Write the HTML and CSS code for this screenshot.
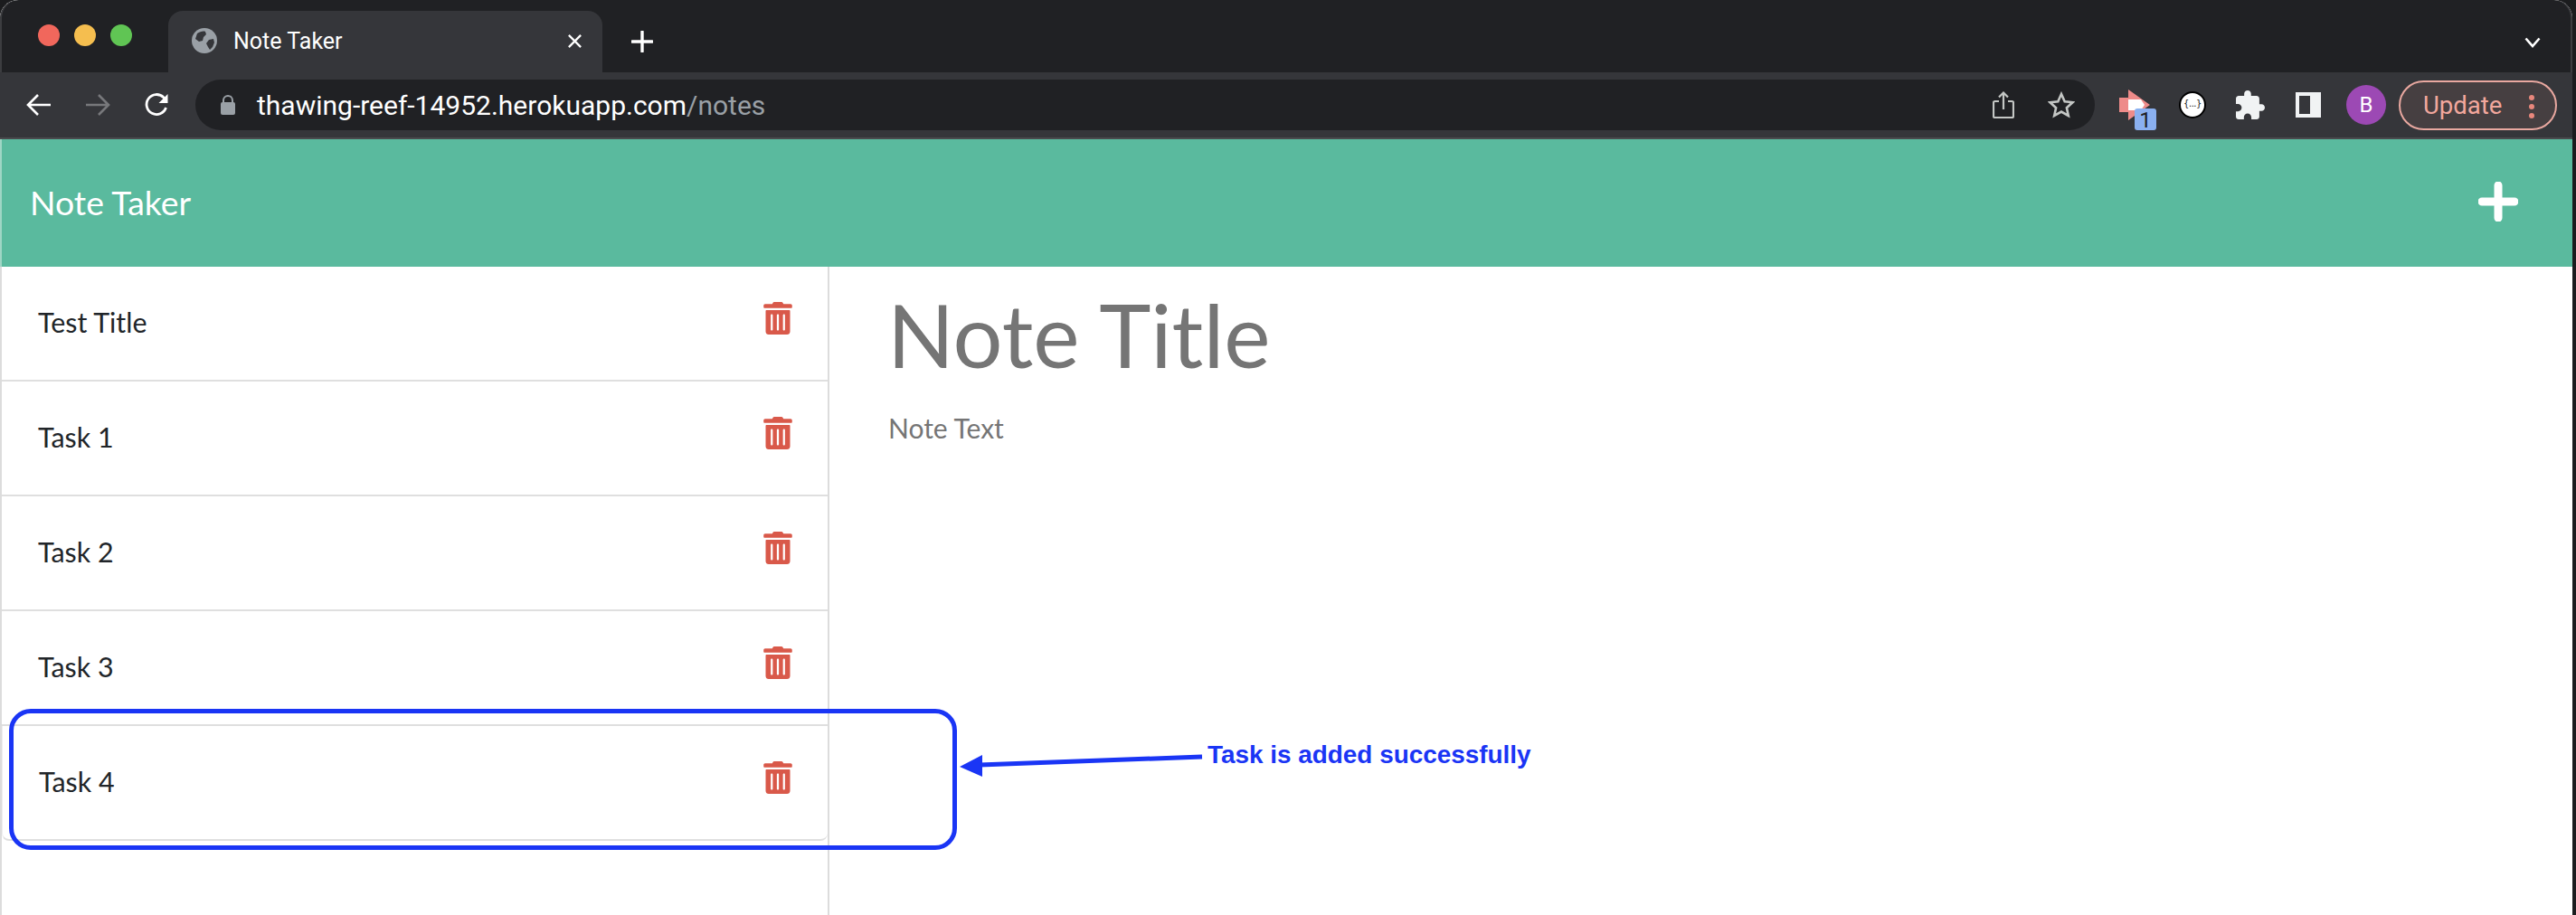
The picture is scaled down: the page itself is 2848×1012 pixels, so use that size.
FILE: index.html
```html
<!DOCTYPE html>
<html>
<head>
  <title>Note Taker</title>
  <link rel="stylesheet" href="styles.css">
</head>
<body>

  <div class="window">

    <!-- browser tabs -->
    <div class="tabstrip">
      <div class="lights">
        <span class="light red"></span>
        <span class="light yellow"></span>
        <span class="light green"></span>
      </div>
      <div class="tab">
        <svg class="globe" viewBox="0 0 28 28">
          <circle cx="14" cy="14" r="14" fill="#9aa0a6"/>
          <path d="M6 6c3-2 7-3 9-2l1 3-3 3-1 4-4 1-4-3zM24 12l-5 1-3 4 2 4 2 3 3-3 2-5z" fill="#35363a"/>
        </svg>
        <span class="tab-title">Note Taker</span>
        <svg class="tab-close" viewBox="0 0 18 18"><path d="M2 2l14 14M16 2L2 16" stroke="#fff" stroke-width="2.4"/></svg>
      </div>
      <svg class="new-tab" viewBox="0 0 24 24"><path d="M12 1v22M1 12h22" stroke="#fff" stroke-width="3.4" stroke-linecap="round"/></svg>
      <svg class="tab-menu" viewBox="0 0 18 12"><path d="M1.5 1.5L9 10l7.5-8.5" fill="none" stroke="#fff" stroke-width="2.6"/></svg>
    </div>

    <!-- address bar -->
    <div class="toolbar">
      <div class="nav-buttons">
        <div class="tool"><svg width="28" height="28" viewBox="0 0 28 28"><path d="M27 14H3M13 3L2 14l11 11" fill="none" stroke="#fff" stroke-width="2.6"/></svg></div>
        <div class="tool"><svg width="28" height="28" viewBox="0 0 28 28"><path d="M1 14h24M15 3l11 11-11 11" fill="none" stroke="#77787b" stroke-width="2.6"/></svg></div>
        <div class="tool"><svg width="28" height="28" viewBox="0 0 28 28"><path d="M24.5 17a11 11 0 1 1-2.6-11.2L25 9" fill="none" stroke="#fff" stroke-width="2.8"/><path d="M26.5 2v10h-10z" fill="#fff"/></svg></div>
      </div>
      <div class="address">
        <svg class="lock" viewBox="0 0 16 22"><path d="M3 9V6a5 5 0 0 1 10 0v3" fill="none" stroke="#9aa0a6" stroke-width="2"/><rect y="8" width="16" height="14" rx="2" fill="#9aa0a6"/></svg>
        <span class="url">thawing-reef-14952.herokuapp.com<span class="url-path">/notes</span></span>
        <svg class="share" viewBox="0 0 24 30"><path d="M7 11H2.5A1.5 1.5 0 0 0 1 12.500V27.500A1.500 1.500 0 0 0 2.500 29h19a1.500 1.500 0 0 0 1.500-1.500V12.500A1.500 1.500 0 0 0 21.500 11H17M12 20V2M7 6.500L12 1.500l5 5" fill="none" stroke="#c4c7c5" stroke-width="2.2"/></svg>
        <svg class="star" viewBox="0 0 30 30"><path d="M15 3l3.700 8.200 8.800 1-6.600 6 1.900 8.800L15 22.500 7.200 27l1.900-8.800-6.600-6 8.800-1z" fill="none" stroke="#c4c7c5" stroke-width="2.600"/></svg>
      </div>
      <div class="extensions">
        <div class="tool ext">
          <svg width="34" height="34" viewBox="0 0 34 34"><path d="M0 9h10V0l24 17-24 17V25H0z" fill="#ee8b89"/><path d="M10 11h14l4 6-4 6H10z" fill="#fff"/></svg>
          <span class="ext-badge">1</span>
        </div>
        <div class="tool"><span class="json-icon">{...}</span></div>
        <div class="tool"><svg width="32" height="32" viewBox="2 1 21 21"><path d="M20.500 11H19V7c0-1.100-.9-2-2-2h-4V3.500C13 2.120 11.880 1 10.500 1S8 2.120 8 3.500V5H4c-1.100 0-1.990.9-1.990 2v3.800H3.500c1.490 0 2.700 1.210 2.700 2.700s-1.210 2.700-2.700 2.700H2V20c0 1.100.9 2 2 2h3.800v-1.500c0-1.490 1.210-2.700 2.700-2.700 1.490 0 2.700 1.210 2.700 2.700V22H17c1.100 0 2-.9 2-2v-4h1.500c1.380 0 2.500-1.120 2.500-2.500S21.880 11 20.500 11z" fill="#f1f3f4"/></svg></div>
        <div class="tool"><svg width="28" height="28" viewBox="0 0 28 28"><path d="M0 0h28v28H0zM4 4v20h12V4z" fill="#f1f3f4" fill-rule="evenodd"/></svg></div>
        <div class="tool"><span class="avatar">B</span></div>
      </div>
      <div class="update">
        <span>Update</span>
        <span class="update-dots"><i></i><i></i><i></i></span>
      </div>
    </div>

    <!-- the app -->
    <div class="navbar">
      <div class="brand">Note Taker</div>
      <svg class="add-note" viewBox="0 0 44 44"><path d="M22 4v36M4 22h36" stroke="#fff" stroke-width="9" stroke-linecap="round"/></svg>
    </div>

    <div class="content">
      <div class="note-list" id="list"></div>
      <div class="note-view">
        <h1>Note Title</h1>
        <p>Note Text</p>
      </div>
    </div>
  </div>

  <!-- annotation drawn over the screenshot -->
  <div class="callout-box"></div>
  <svg class="callout-arrow" viewBox="0 0 270 26" width="270" height="26">
    <path d="M268 3L22 12" stroke="#1a35f5" stroke-width="5"/>
    <path d="M0 14L25 1v24z" fill="#1a35f5"/>
  </svg>
  <div class="callout-text">Task is added successfully</div>

  <script>
    const notes = ["Test Title", "Task 1", "Task 2", "Task 3", "Task 4"];
    const trash = `<svg class="trash" viewBox="0 0 448 512"><path d="M0 84V56c0-13.300 10.700-24 24-24h112l9.400-18.700c4-8.200 12.300-13.300 21.400-13.300h114.300c9.100 0 17.400 5.100 21.500 13.300L312 32h112c13.300 0 24 10.700 24 24v28c0 6.600-5.400 12-12 12H12C5.400 96 0 90.600 0 84zm416 56v324c0 26.500-21.500 48-48 48H80c-26.500 0-48-21.500-48-48V140c0-6.600 5.400-12 12-12h360c6.600 0 12 5.400 12 12zm-272 68c0-8.800-7.200-16-16-16s-16 7.200-16 16v224c0 8.800 7.200 16 16 16s16-7.200 16-16V208zm96 0c0-8.800-7.200-16-16-16s-16 7.200-16 16v224c0 8.800 7.200 16 16 16s16-7.200 16-16V208zm96 0c0-8.800-7.200-16-16-16s-16 7.200-16 16v224c0 8.800 7.200 16 16 16s16-7.200 16-16V208z"/></svg>`;

    document.getElementById("list").innerHTML = notes
      .map(n => `<div class="note-row"><span>${n}</span>${trash}</div>`)
      .join("");
  </script>

</body>
</html>
```

FILE: styles.css
```css
html, body { margin: 0; height: 100%; overflow: hidden; }
body { font-family: Lato, sans-serif; background-color: #1b1c1e; position: relative; }

.window {
  width: 2844px;
  height: 1012px;
  background-color: white;
  border-radius: 20px 20px 0 0;
  box-shadow: inset 2px 0 0 #dcdcdc;
  overflow: hidden;
}

/* tabs */
.tabstrip {
  height: 80px;
  background-color: #202124;
  display: flex;
  align-items: flex-end;
  position: relative;
  border-radius: 20px 20px 0 0;
  box-shadow: inset 2px 0 0 #3c3d40, inset -2px 0 0 #3c3d40;
}
.lights {
  width: 186px;
  height: 80px;
  display: flex;
  gap: 16px;
  padding: 27px 0 0 42px;
  box-sizing: border-box;
}
.light { width: 24px; height: 24px; border-radius: 50%; }
.red { background-color: #f1675c; }
.yellow { background-color: #f5be4f; }
.green { background-color: #60c554; }

.tab {
  width: 480px;
  height: 68px;
  background-color: #35363a;
  border-radius: 16px 16px 0 0;
  display: flex;
  align-items: center;
  padding: 0 22px 0 26px;
  box-sizing: border-box;
}
.globe { width: 28px; height: 28px; margin-top: -2px; }
.tab-title { color: white; font: 25px Roboto, sans-serif; margin-left: 18px; flex: 1; margin-top: -2px; }
.tab-close { width: 17px; height: 17px; margin-top: -1px; }
.new-tab { width: 24px; height: 24px; margin: 0 0 22px 32px; }
.tab-menu { width: 18px; height: 12px; position: absolute; right: 35px; top: 41px; }

/* address bar */
.toolbar {
  height: 72px;
  background-color: #35363a;
  border-bottom: 2px solid #4a4b4e;
  display: flex;
  align-items: center;
  padding-left: 11px;
  box-sizing: content-box;
}
.nav-buttons { display: flex; gap: 1px; width: 205px; }
.tool {
  width: 64px;
  height: 56px;
  display: flex;
  align-items: center;
  justify-content: center;
  position: relative;
  flex: none;
}
.address {
  width: 2100px;
  height: 56px;
  background-color: #202124;
  border-radius: 28px;
  display: flex;
  align-items: center;
  padding: 0 22px 0 28px;
  box-sizing: border-box;
}
.lock { width: 16px; height: 22px; }
.url { color: white; font: 30px Roboto, sans-serif; margin-left: 24px; flex: 1; }
.url-path { color: #9aa0a6; }
.share { width: 24px; height: 30px; margin-right: 37px; }
.star { width: 30px; height: 30px; }

.extensions { display: flex; margin-left: 12px; }
.ext-badge {
  position: absolute;
  left: 32px;
  bottom: 0;
  width: 24px;
  height: 24px;
  background-color: #8ab0f0;
  border-radius: 3px;
  color: #202124;
  font: 24px/26px Roboto, sans-serif;
  text-align: center;
}
.json-icon {
  width: 30px;
  height: 30px;
  box-sizing: border-box;
  border-radius: 50%;
  background-color: white;
  border: 2px solid black;
  color: #222;
  font: 10px/24px "DejaVu Sans", sans-serif;
  letter-spacing: -0.5px;
  text-align: center;
}
.avatar {
  width: 44px;
  height: 44px;
  border-radius: 50%;
  background-color: #9c49b4;
  color: white;
  font: 24px/44px Roboto, sans-serif;
  text-align: center;
}
.update {
  width: 175px;
  height: 55px;
  margin-left: 4px;
  border: 2px solid #e9a8a0;
  border-radius: 28px;
  background-color: #463f41;
  color: #f2a79d;
  font: 27.500px Roboto, sans-serif;
  display: flex;
  align-items: center;
  padding-left: 25px;
  box-sizing: border-box;
  position: relative;
}
.update-dots { position: absolute; right: 23px; top: 14px; display: flex; flex-direction: column; gap: 4px; }
.update-dots i { width: 6px; height: 6px; border-radius: 50%; background-color: #e8877c; }

/* app */
.navbar {
  height: 141px;
  box-sizing: border-box;
  background-color: #5aba9e;
  box-shadow: inset 2px 0 0 #9fd6c5;
  display: flex;
  justify-content: space-between;
  align-items: center;
  padding: 0 62px 3px 33px;
}
.brand { color: white; font-size: 37.400px; }
.add-note { width: 44px; height: 44px; margin-right: -2px; margin-bottom: 1px; }

.content { display: flex; height: 717px; }
.note-list {
  width: 917px;
  box-sizing: border-box;
  border-right: 2px solid #dcdcdc;
  padding-left: 2px;
}
.note-row {
  height: 127px;
  box-sizing: border-box;
  border-bottom: 2px solid #dfdfdf;
  display: flex;
  justify-content: space-between;
  padding: 39px 39px 0 40px;
  font-size: 30.400px;
  color: #212529;
}
.note-row span { margin-top: 4px; }
.note-row:last-child { border-radius: 0 0 8px 8px; border-left: 1px solid #eee; }
.trash { width: 32px; height: 36px; fill: #d9594a; }

.note-view { padding: 17px 0 0 64px; color: #757575; }
.note-view h1 { margin: 0; font-size: 97px; font-weight: 400; line-height: 1.2; }
.note-view p { margin: 27px 0 0; font-size: 30px; padding-left: 1px; }

/* annotation */
.callout-box {
  position: absolute;
  left: 10px;
  top: 784px;
  width: 1048px;
  height: 156px;
  box-sizing: border-box;
  border: 5px solid #1a35f5;
  border-radius: 24px;
}
.callout-arrow { position: absolute; left: 1061px; top: 834px; }
.callout-text {
  position: absolute;
  left: 1335px;
  top: 819px;
  color: #1a35f5;
  font: bold 27.900px "Liberation Sans", sans-serif;
}
```
